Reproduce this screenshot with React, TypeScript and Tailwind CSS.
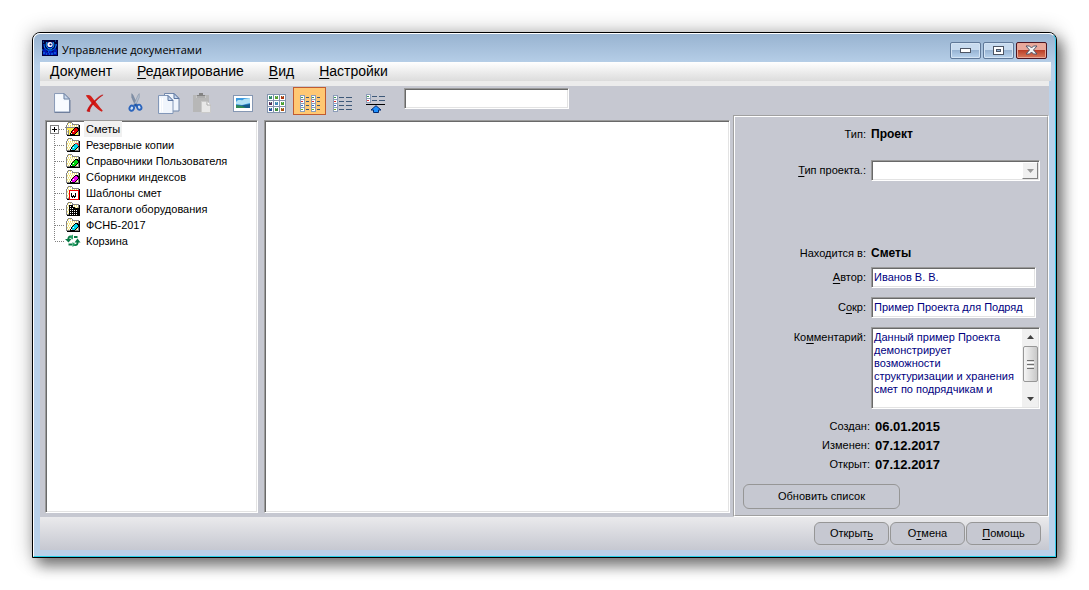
import React from "react";

const sunken =
  "border border-t-[#9a9a9a] border-l-[#9a9a9a] border-r-white border-b-white bg-white shadow-[inset_1px_1px_0_#696969,inset_-1px_-1px_0_#e3e3e3]";

function Key({ children }: { children: React.ReactNode }) {
  return <u className="underline decoration-1 underline-offset-2">{children}</u>;
}

function AppIcon() {
  return (
    <svg width="16" height="16" viewBox="0 0 16 16" aria-hidden="true">
      <rect width="16" height="16" fill="#00003c" />
      <path d="M1 10 L3 8 L5 12 L8 10 L11 12 L13 8 L15 10 V15 H1Z" fill="#0018b8" />
      <path d="M2 4 C2 8 4 10.500 8 10.500 C12 10.500 14 8 14 4" fill="none" stroke="#0050e0" strokeWidth="1.300" />
      <path d="M5 2 C3 5 5 9 8 9 C11 9 13 5 11 2" fill="#0010a0" stroke="#20b8f0" strokeWidth="1" />
      <circle cx="8" cy="4.500" r="2.600" fill="#fff" />
      <circle cx="8.500" cy="4.500" r="1.100" fill="#001060" />
      <path d="M1 2h1M13 1h1M2 7h1M13 7h1M1 13h2M4 14h1M6 12h1M9 14h2M12 13h2M14 5h1M0 10h1M7 14h1" stroke="#1c90f0" strokeWidth="1" />
    </svg>
  );
}

function NewIcon() {
  return (
    <svg width="18" height="20" viewBox="0 0 18 20" aria-hidden="true">
      <path d="M1.500.500H11l5.500 5.500v13H1.500z" fill="#eef4fc" stroke="#8c9cb8" />
      <path d="M2.500 1.500H10v6h5.500V18h-13z" fill="#f8fbff" />
      <path d="M11 .500v5.500h5.500z" fill="#c9d8ec" stroke="#6c80a0" />
      <path d="M1.500 19.500h15.500V7" fill="none" stroke="#6f7f9c" />
    </svg>
  );
}

function DeleteIcon() {
  return (
    <svg width="18" height="18" viewBox="0 0 20 20" aria-hidden="true">
      <path d="M1 2 C5 1 6 4 9 8 C12 11 14 15 18 19 C13 17 10 13 7 10 C5 7 3 5 1 2z" fill="#dc1a14" stroke="#d0201a" strokeWidth="1.500" />
      <path d="M19 1 C14 4 11 8 8 11 C6 14 4 16 4 20 L1 19 C3 14 6 10 10 7 C13 4 16 1 19 1z" fill="#d01010" stroke="#b80c0c" strokeWidth=".5" />
    </svg>
  );
}

function CutIcon() {
  return (
    <svg width="15" height="20" viewBox="0 0 16 20" aria-hidden="true">
      <path d="M4 0 L5.500 2 L10 12 L8 13 L4 4z" fill="#8292aa" stroke="#667890" strokeWidth=".5" />
      <path d="M12 0 L10.500 2 L6 12 L8 13 L12 4z" fill="#b4bfce" stroke="#74859c" strokeWidth=".5" />
      <ellipse cx="4" cy="15.500" rx="2.300" ry="2.800" fill="#cfe0f4" stroke="#2a64bc" strokeWidth="2" transform="rotate(25 4 15.500)" />
      <ellipse cx="12" cy="14.500" rx="2.200" ry="2.800" fill="#cfe0f4" stroke="#2a64bc" strokeWidth="2" transform="rotate(-25 12 14.500)" />
      <path d="M6 12l2-1.500 2 1.500-2 2z" fill="#1c55a8" />
    </svg>
  );
}

function CopyIcon() {
  return (
    <svg width="22" height="21" viewBox="0 0 22 21" aria-hidden="true">
      <path d="M6.500.500H16l5 5v12.500H6.500z" fill="#f0f5fc" stroke="#7187ab" />
      <path d="M16 .500v5h5z" fill="#c4d4ea" stroke="#5d76a0" />
      <path d="M.500 2.500H10l5 5v13H.500z" fill="#f0f5fc" stroke="#8297b8" />
      <path d="M10 2.500v5h5z" fill="#c4d4ea" stroke="#5d76a0" />
      <path d="M2.500 5v14M4.500 5v14" stroke="#fff" />
    </svg>
  );
}

function PasteIcon() {
  return (
    <svg width="20" height="20" viewBox="0 0 20 20" aria-hidden="true">
      <rect x="1" y="2" width="16" height="17" fill="#b7b7b7" />
      <path d="M5 2h2V0h4v2h2v3H5z" fill="#838383" />
      <path d="M4 4h10" stroke="#d9d9d9" />
      <path d="M9.500 8.500H15l3.500 3.500v7.500h-9z" fill="#e8e8e8" stroke="#cacaca" />
      <path d="M15 8.500V12h3.500" fill="#fff" stroke="#aaa" />
    </svg>
  );
}

function PictureIcon() {
  return (
    <svg width="20" height="17" viewBox="0 0 20 17" aria-hidden="true">
      <rect x=".5" y=".5" width="19" height="16" fill="#fff" stroke="#8597b3" />
      <rect x="3" y="3" width="14" height="10" fill="#3d9be0" />
      <path d="M3 7 C6 3 9 7 11 4 L17 3 V8 L9 10 3 9z" fill="#b2e2f5" />
      <path d="M3 10 L8 10.500 17 9 V13 H3z" fill="#175c8c" />
      <path d="M3 10 L9 11 13 13 H3z" fill="#2f8a57" />
    </svg>
  );
}

function GridIcon() {
  const tints = ["#2f8a6a", "#5aa02c", "#b03a10", "#56305c", "#3f86b8", "#4ca030", "#28509c", "#3a8a3a", "#b05010"];
  return (
    <svg width="19" height="19" viewBox="0 0 19 19" shapeRendering="crispEdges" aria-hidden="true">
      <rect x="0" y="0" width="19" height="19" fill="#8294ad" />
      {tints.map((tint, i) => {
        const x = (i % 3) * 6 + 1;
        const y = Math.floor(i / 3) * 6 + 1;
        return (
          <g key={i}>
            <rect x={x} y={y} width="5" height="5" fill="#fff" />
            <rect x={x + 1} y={y + 1} width="3" height="3" fill={tint} />
            <rect x={x + 2} y={y + 1} width="1" height="1" fill="#8cd0b4" />
          </g>
        );
      })}
    </svg>
  );
}

const dots = ["#3f9a50", "#e03030", "#3470c0", "#70b020"];

function ListColumn({ x, count, line }: { x: number; count: number; line: number }) {
  return (
    <g>
      {dots.slice(0, count).map((dot, i) => (
        <g key={dot}>
          <rect x={x} y={i * 4 + 1} width="5" height="5" fill="#8c9db8" />
          <rect x={x + 1} y={i * 4 + 2} width="3" height="3" fill="#fff" />
          <rect x={x + 1} y={i * 4 + 3} width="2" height="1" fill={dot} />
          <rect x={x + 6} y={i * 4 + 3} width={line} height="1" fill="#3d5878" />
        </g>
      ))}
    </g>
  );
}

function ColumnsIcon() {
  return (
    <svg width="20" height="19" viewBox="0 0 20 19" shapeRendering="crispEdges" aria-hidden="true">
      <ListColumn x={0} count={4} line={3} />
      <ListColumn x={11} count={4} line={3} />
    </svg>
  );
}

function DetailsIcon() {
  return (
    <svg width="20" height="19" viewBox="0 0 20 19" shapeRendering="crispEdges" aria-hidden="true">
      <ListColumn x={0} count={4} line={5} />
      <path d="M13 3.500h6M13 7.500h6M13 11.500h6M13 15.500h6" stroke="#3d5878" />
    </svg>
  );
}

function LevelUpIcon() {
  return (
    <svg width="20" height="20" viewBox="0 0 20 20" aria-hidden="true">
      <g shapeRendering="crispEdges">
        <ListColumn x={0} count={2} line={5} />
        <path d="M13 3.500h6M13 7.500h6" stroke="#3d5878" />
        <path d="M0 11.500h19" stroke="#000" />
      </g>
      <path d="M10 12.700l5 4.300h-2.500v2.500H7.500V17H5z" fill="#1e90ff" stroke="#002a70" />
    </svg>
  );
}

function Folder({ open, children }: { open?: boolean; children?: React.ReactNode }) {
  return (
    <svg width="16" height="16" viewBox="0 0 16 16" shapeRendering="crispEdges" aria-hidden="true">
      <path d="M1 4h1V2h1V1h4v1h1v1h6v11H1z" fill="#848484" />
      <path d="M2 4h1V2h4v2h6v9H2z" fill="#fff" />
      <path d="M3 4.500h10M2 6.500h11M3 8.500h10M2 10.500h11M3 12.500h10M3 2.500h4" stroke="#f0e060" strokeDasharray="1 1" />
      <path d="M3 5.500h10M2 7.500h11M3 9.500h10M2 11.500h11" stroke="#f6ecaa" strokeDasharray="1 1" />
      {open && <path d="M0 6h11v1h2v7H4v-3H3V9H1V7H0z" fill="#ffe94a" />}
      {open && <path d="M0 6.500h10M1.500 7v2M3.500 9v4" stroke="#848484" />}
      <path d="M14 4h1v11H2v-1h12z" fill="#000" />
      {children}
    </svg>
  );
}

function Pencil({ color, tip }: { color: string; tip?: string }) {
  return (
    <g>
      <path d="M5 14v-2h1v-2h1V9h1V8h1V7h1V6h3v1h1v3h-1v1h-1v1h-1v1h-1v1z" fill="#000" />
      <path d="M6 12h1v-2h1V9h1V8h1V7h2v1h1v2h-1v1h-1v1h-1v1H6z" fill={color} />
      <path d="M6 12h1v1H6zM8 10h1v1H8z" fill="#fff" />
      {tip && <path d="M10 6h3v1h1v2h-1V8h-1V7h-2z" fill={tip} />}
    </g>
  );
}

function RecycleIcon() {
  return (
    <svg width="16" height="16" viewBox="0 0 16 16" aria-hidden="true">
      <path d="M6.500 3.500C4 3 3 5 3.500 7.500M3.500 11.500h4" fill="none" stroke="#087a45" strokeWidth="2" />
      <path d="M0 6h6.500L3.500 9.500z" fill="#087a45" />
      <path d="M4 4.500L8 1.500v5z" fill="#2aa368" />
      <path d="M9 12C12 12.500 13 11 12.500 8.500M9 4h3.500" fill="none" stroke="#087a45" strokeWidth="2" />
      <path d="M9.500 9.500h6L12.500 5.500z" fill="#087a45" />
      <path d="M11 11.500L7.500 14V9z" fill="#2aa368" />
    </svg>
  );
}

const tree: { label: string; icon: React.ReactNode; expandable?: boolean }[] = [
  { label: "Сметы", icon: <Folder open><Pencil color="#e80000" /></Folder>, expandable: true },
  { label: "Резервные копии", icon: <Folder><Pencil color="#00d8e8" tip="#e04040" /></Folder> },
  { label: "Справочники Пользователя", icon: <Folder><Pencil color="#00d810" /></Folder> },
  { label: "Сборники индексов", icon: <Folder><Pencil color="#f000f0" /></Folder> },
  {
    label: "Шаблоны смет",
    icon: (
      <Folder>
        <rect x="4.500" y="5.500" width="9" height="9" fill="#fff" stroke="#f00000" />
        <path d="M6 8h1v3h1v-1h1v1h1V8h1v4h-1v1H9v-1H8v1H7v-1H6z" fill="#000" />
      </Folder>
    ),
  },
  {
    label: "Каталоги оборудования",
    icon: (
      <Folder>
        <path d="M4 4h4v2h2v1h4v8H4z" fill="#000" />
        <path d="M5 5.500h2M5 7.500h4M5 9.500h8M5 11.500h8M5 13.500h8" stroke="#fff" strokeDasharray="1 1" />
      </Folder>
    ),
  },
  { label: "ФСНБ-2017", icon: <Folder><Pencil color="#00d8e8" /></Folder> },
  { label: "Корзина", icon: <RecycleIcon /> },
];

function Connector({ first, last, expandable }: { first: boolean; last: boolean; expandable?: boolean }) {
  return (
    <svg width="18" height="16" viewBox="0 0 18 16" shapeRendering="crispEdges" aria-hidden="true">
      <path d={first ? "M7.500 8V16" : last ? "M7.500 0V8" : "M7.500 0V16"} stroke="#808080" strokeDasharray="1 1" />
      <path d="M8 8.500H18" stroke="#808080" strokeDasharray="1 1" />
      {expandable && (
        <g>
          <rect x="3.500" y="4.500" width="8" height="8" fill="#fff" stroke="#808080" />
          <path d="M5 8.500h5M7.500 6v5" stroke="#000" />
        </g>
      )}
    </svg>
  );
}

function ToolButton({ label, active, children }: { label: string; active?: boolean; children: React.ReactNode }) {
  return (
    <button
      type="button"
      aria-label={label}
      className={
        active
          ? "flex h-7 w-[33px] items-center justify-center border border-[#c05a30] bg-[#ffc873] pt-1"
          : "flex h-7 w-[33px] items-center justify-center pt-1"
      }
    >
      {children}
    </button>
  );
}

function Field({ id, label, children }: { id?: string; label: React.ReactNode; children: React.ReactNode }) {
  return (
    <div className="flex gap-[5px]">
      <label htmlFor={id} className="w-[131px] shrink-0 pt-[3px] text-right leading-[14px]">
        {label}
      </label>
      {children}
    </div>
  );
}

function Info({ label, value }: { label: string; value: string }) {
  return (
    <div className="flex gap-[5px] leading-[14px]">
      <span className="w-[131px] shrink-0 text-right">{label}</span>
      <b className="text-[12px]">{value}</b>
    </div>
  );
}

const pushButton = "rounded-md border border-[#969696] bg-[#c6c8d1]";
const caption =
  "flex h-[17px] w-[31px] items-center justify-center rounded-[2px] border border-[#5f7898] bg-linear-to-b from-[#c8dbef] from-45% via-[#98b4d3] via-50% to-[#bad4ee] shadow-[inset_0_0_0_1px_#d4e4f4]";

export default function App() {
  return (
    <div className="flex min-h-screen flex-col bg-white p-8 font-['Liberation_Sans',Arial,sans-serif] text-[11px] text-black">
      <div className="flex flex-1 flex-col rounded-t-lg border border-black bg-[#b9d1ea] shadow-[6px_8px_14px_rgba(0,0,0,0.45),0_0_20px_rgba(0,0,0,0.3)]">
        <div className="flex flex-1 flex-col rounded-t-[7px] border border-t-white border-r-[#35c8e8] border-b-[#25d0e8] border-l-white bg-linear-to-b from-[#98b3d0] to-[#b9d1ea] to-[32px] pr-1 pb-[6px] pl-[6px]">
          <header className="flex h-7 items-center gap-1 pl-0.5">
            <AppIcon />
            <h1 className="flex-1 pt-1 font-['Open_Sans','Noto_Sans',sans-serif] text-[11px] leading-4">
              Управление документами
            </h1>
            <div className="flex gap-0.5 pt-1 pr-1">
              <button type="button" aria-label="Свернуть" className={caption}>
                <svg width="12" height="6" viewBox="0 0 12 6" aria-hidden="true">
                  <rect x=".5" y="1.500" width="10" height="4" fill="#fff" stroke="#4d5564" />
                </svg>
              </button>
              <button type="button" aria-label="Развернуть" className={caption}>
                <svg width="12" height="9" viewBox="0 0 12 9" aria-hidden="true">
                  <rect x=".5" y=".5" width="10" height="8" fill="#fff" stroke="#4d5564" />
                  <rect x="3.500" y="3.500" width="4" height="2" fill="#8fb0d6" stroke="#4d5564" />
                </svg>
              </button>
              <button
                type="button"
                aria-label="Закрыть"
                className="flex h-[17px] w-[31px] items-center justify-center rounded-[2px] border border-[#4d1420] bg-linear-to-b from-[#e9a99c] from-45% via-[#bb3f28] via-50% to-[#d87a5c] shadow-[inset_0_0_0_1px_#e8a898]"
              >
                <svg width="13" height="10" viewBox="0 0 13 10" aria-hidden="true">
                  <path
                    d="M1 1h3.500l2 2 2-2H12L8.500 5 12 9H8.500l-2-2-2 2H1l3.500-4z"
                    fill="#f4f4f4"
                    stroke="#50566a"
                    strokeLinejoin="round"
                  />
                </svg>
              </button>
            </div>
          </header>

          <nav className="flex h-[19px] items-center gap-[25px] bg-linear-to-b from-white to-[#dcdcdc] pl-2.5 text-[14px] leading-[19px]">
            <button type="button"><Key>Д</Key>окумент</button>
            <button type="button"><Key>Р</Key>едактирование</button>
            <button type="button"><Key>В</Key>ид</button>
            <button type="button"><Key>Н</Key>астройки</button>
          </nav>

          <main className="mr-0.5 flex flex-1 flex-col border-t-5 border-[#ececec] bg-[#c6c8d1]">
            <div className="flex flex-1">
              <div className="flex min-w-0 flex-1 flex-col pt-px pb-1 pl-[5px]">
                <div className="flex h-[33px] items-start">
                  <ToolButton label="Создать"><NewIcon /></ToolButton>
                  <ToolButton label="Удалить"><DeleteIcon /></ToolButton>
                  <span className="w-2" />
                  <ToolButton label="Вырезать"><CutIcon /></ToolButton>
                  <ToolButton label="Копировать"><CopyIcon /></ToolButton>
                  <ToolButton label="Вставить"><PasteIcon /></ToolButton>
                  <span className="w-2" />
                  <ToolButton label="Рисунок"><PictureIcon /></ToolButton>
                  <span className="w-px" />
                  <ToolButton label="Значки"><GridIcon /></ToolButton>
                  <ToolButton label="Список" active><ColumnsIcon /></ToolButton>
                  <ToolButton label="Таблица"><DetailsIcon /></ToolButton>
                  <ToolButton label="На уровень вверх"><LevelUpIcon /></ToolButton>
                  <input type="text" aria-label="Поиск" className={`mt-px ml-3 h-[21px] w-[165px] px-1 ${sunken}`} />
                </div>
                <div className="flex flex-1 gap-1.5 pr-[3px]">
                  <ul className={`w-[213px] pl-px ${sunken}`}>
                    {tree.map((item, i) => (
                      <li key={item.label} className="flex h-4 items-center">
                        <Connector first={i === 0} last={i === tree.length - 1} expandable={item.expandable} />
                        {item.icon}
                        <span
                          className={
                            i === 0 ? "ml-[3px] bg-[#f0f0f0] px-0.5 leading-4" : "ml-[3px] px-0.5 leading-4"
                          }
                        >
                          {item.label}
                        </span>
                      </li>
                    ))}
                  </ul>
                  <section aria-label="Содержимое" className={`flex-1 ${sunken}`} />
                </div>
              </div>

              <aside className="mt-[29px] w-[316px] shrink-0 border border-white border-t-[#a0a0a0] border-l-[#a0a0a0]">
                <div className="h-full border border-t-white border-r-[#a0a0a0] border-b-[#a0a0a0] border-l-white pt-2.5 pb-1.5">
                  <Info label="Тип:" value="Проект" />
                  <div className="mt-[19px]">
                    <Field id="kind" label={<><Key>Т</Key>ип проекта.:</>}>
                      <div className={`flex h-[21px] w-[169px] p-px ${sunken}`}>
                        <select id="kind" disabled className="min-w-0 flex-1 appearance-none bg-white" />
                        <span className="flex w-4 items-center justify-center border border-t-white border-r-[#808080] border-b-[#808080] border-l-white bg-[#f0f0f0]">
                          <svg width="7" height="4" viewBox="0 0 7 4" aria-hidden="true">
                            <path d="M0 0h7L3.500 4z" fill="#9a9a9a" />
                          </svg>
                        </span>
                      </div>
                    </Field>
                  </div>
                  <div className="mt-[65px]">
                    <Info label="Находится в:" value="Сметы" />
                  </div>
                  <div className="mt-[7px] flex flex-col gap-[9px]">
                    <Field id="author" label={<><Key>А</Key>втор:</>}>
                      <input id="author" defaultValue="Иванов В. В." className={`h-[21px] w-[165px] px-0.5 pb-0.5 text-[#000080] ${sunken}`} />
                    </Field>
                    <Field id="short" label={<>С<Key>о</Key>кр:</>}>
                      <input id="short" defaultValue="Пример Проекта для Подряд" className={`h-[21px] w-[165px] px-0.5 pb-0.5 text-[#000080] ${sunken}`} />
                    </Field>
                    <Field id="comment" label={<>Ко<Key>м</Key>ментарий:</>}>
                      <div className={`flex h-[82px] w-[169px] p-px ${sunken}`}>
                        <textarea
                          id="comment"
                          defaultValue={"Данный пример Проекта\nдемонстрирует\nвозможности\nструктуризации и хранения\nсмет по подрядчикам и"}
                          className="min-w-0 flex-1 resize-none overflow-hidden pt-0.5 pl-px whitespace-pre text-[#000080] leading-[13px]"
                        />
                        <span className="flex w-4 flex-col items-center bg-[#f0f0f0]">
                          <svg width="15" height="17" viewBox="0 0 15 17" aria-hidden="true">
                            <path d="M4 10h7L7.500 6z" fill="#404040" />
                          </svg>
                          <span className="flex h-9 w-[15px] flex-col items-center justify-center gap-px rounded-[2px] border border-[#979797] bg-linear-to-r from-[#f5f5f5] to-[#c8c8c8]">
                            <i className="h-px w-[7px] bg-[#707070]" />
                            <i className="h-px w-[7px] bg-white" />
                            <i className="h-px w-[7px] bg-[#707070]" />
                            <i className="h-px w-[7px] bg-white" />
                            <i className="h-px w-[7px] bg-[#707070]" />
                          </span>
                          <span className="flex-1" />
                          <svg width="15" height="17" viewBox="0 0 15 17" aria-hidden="true">
                            <path d="M4 7h7l-3.500 4z" fill="#404040" />
                          </svg>
                        </span>
                      </div>
                    </Field>
                  </div>
                  <dl className="mt-2 leading-[19px]">
                    {[
                      ["Создан:", "06.01.2015"],
                      ["Изменен:", "07.12.2017"],
                      ["Открыт:", "07.12.2017"],
                    ].map(([name, value]) => (
                      <div key={name} className="flex gap-[5px]">
                        <dt className="w-[135px] text-right">{name}</dt>
                        <dd className="text-[13px] font-bold">{value}</dd>
                      </div>
                    ))}
                  </dl>
                  <button type="button" className={`mt-2.5 ml-2 h-[25px] w-[157px] ${pushButton}`}>
                    Обновить список
                  </button>
                </div>
              </aside>
            </div>
            <footer className="flex h-[33px] justify-end gap-px bg-linear-to-b from-[#eaeaec] to-[#c6c8d1] pt-[5px] pr-2">
              <button type="button" className={`h-[23px] w-[75px] ${pushButton}`}>Открыт<Key>ь</Key></button>
              <button type="button" className={`h-[23px] w-[75px] ${pushButton}`}>О<Key>т</Key>мена</button>
              <button type="button" className={`h-[23px] w-[75px] ${pushButton}`}><Key>П</Key>омощь</button>
            </footer>
          </main>
        </div>
      </div>
    </div>
  );
}
